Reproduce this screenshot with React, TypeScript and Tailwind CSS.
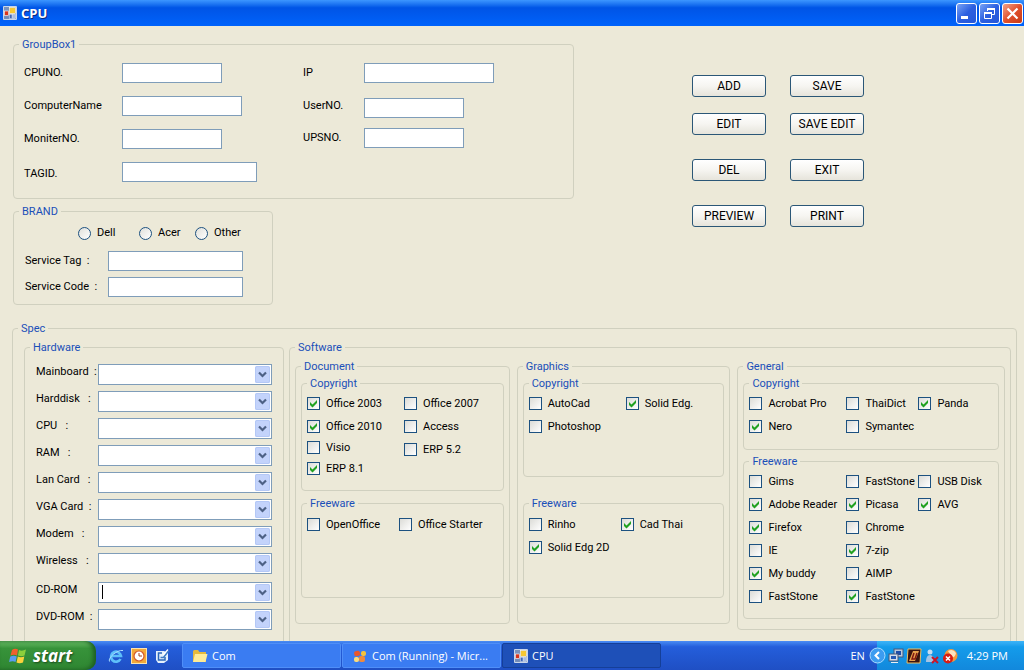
import { useId, type ReactNode } from "react";

type Item = { label: string; checked?: boolean; gap?: string };

function Group({ title, className = "", children }: { title: string; className?: string; children: ReactNode }) {
  return (
    <fieldset className={`min-w-0 rounded-[4px] border border-[#d0d0bf] ${className}`}>
      <legend className="ml-[5px] px-[3px] leading-[13px] text-[#1a4fb8]">{title}</legend>
      {children}
    </fieldset>
  );
}

function Field({
  label,
  labelWidth,
  inputWidth,
  className = "items-center",
}: {
  label: string;
  labelWidth: string;
  inputWidth: string;
  className?: string;
}) {
  const id = useId();
  return (
    <div className={`flex ${className}`}>
      <label htmlFor={id} className={`shrink-0 whitespace-pre leading-4 ${labelWidth}`}>
        {label}
      </label>
      <input id={id} type="text" className={`h-5 border border-[#7f9db9] bg-white px-1 outline-none ${inputWidth}`} />
    </div>
  );
}

function Combo({ label, caret }: { label: string; caret?: boolean }) {
  const id = useId();
  return (
    <div className="flex items-start">
      <label htmlFor={id} className="w-[62px] shrink-0 whitespace-pre leading-4">
        {label}
      </label>
      <div className="relative h-[21px] min-w-0 flex-1">
        <select id={id} className="block h-full w-full appearance-none border border-[#7f9db9] bg-white outline-none" />
        {caret && <span className="absolute left-1 top-[3px] h-[14px] w-px bg-black" />}
        <svg className="pointer-events-none absolute right-[2px] top-[2px] h-[17px] w-[15px]" viewBox="0 0 15 17">
          <rect width="15" height="17" rx="1.5" fill="#c3d3fb" />
          <rect x="0.5" y="0.5" width="14" height="16" rx="1.5" fill="none" stroke="#b4c8f6" />
          <path d="M4 6.5l3.5 3.5L11 6.5" fill="none" stroke="#4d6185" strokeWidth="2.2" />
        </svg>
      </div>
    </div>
  );
}

function Check({ label, checked, gap = "" }: Item) {
  return (
    <label className={`flex h-[13px] items-center gap-[6px] whitespace-nowrap ${gap}`}>
      <span className="relative h-[13px] w-[13px] shrink-0">
        <input
          type="checkbox"
          defaultChecked={checked}
          className="peer block h-[13px] w-[13px] appearance-none border border-[#1c5180] bg-linear-to-br from-[#dcdcd7] to-white"
        />
        <svg className="pointer-events-none absolute inset-0 hidden peer-checked:block" viewBox="0 0 13 13">
          <path d="M3 5v3l2.5 2.5L10 6V3L5.500 7.500z" fill="#21a121" />
        </svg>
      </span>
      {label}
    </label>
  );
}

function CheckColumn({ items, gap = "gap-2.5" }: { items: Item[]; gap?: string }) {
  return (
    <div className={`flex flex-col ${gap}`}>
      {items.map((item, i) => (
        <Check key={i} {...item} />
      ))}
    </div>
  );
}

function Radio({ label }: { label: string }) {
  return (
    <label className="flex h-[14px] items-center gap-[6px]">
      <input
        type="radio"
        name="brand"
        className="h-[13px] w-[13px] appearance-none rounded-full border border-[#1c5180] bg-linear-to-br from-[#e0e0da] to-white checked:border-4"
      />
      {label}
    </label>
  );
}

function FormButton({ children }: { children: ReactNode }) {
  return (
    <button
      type="button"
      className="h-[22px] w-[74px] rounded-[3px] border border-[#2b5777] bg-linear-to-b from-white via-[#f6f5f1] to-[#e6e4db] text-xs leading-4"
    >
      {children}
    </button>
  );
}

function FormIcon({ className }: { className: string }) {
  return (
    <svg className={className} viewBox="0 0 14 14">
      <rect width="14" height="14" rx="1" fill="#c9d6ea" />
      <rect x="1" y="1" width="12" height="12" fill="#7b93bd" />
      <rect x="1.500" y="5" width="4" height="4.500" fill="#d8341c" stroke="#fff" strokeWidth="0.6" />
      <rect x="6.500" y="1.500" width="6" height="6" fill="#f6c832" stroke="#fff" strokeWidth="0.6" />
      <rect x="6.500" y="8.500" width="2.500" height="4" fill="#3e66b8" stroke="#dce6f5" strokeWidth="0.5" />
      <rect x="9.500" y="8.500" width="3" height="4" fill="#a8bce0" stroke="#dce6f5" strokeWidth="0.5" />
      <rect x="1.500" y="10.500" width="4" height="2" fill="#6d88b8" />
    </svg>
  );
}

function TitleBar() {
  const button = "flex h-[21px] w-[21px] items-center justify-center rounded-[3px] border border-white";
  return (
    <header className="flex h-[26px] shrink-0 items-center bg-linear-to-b from-[#3c96ff] via-[#0054e6] via-30% to-[#0063fb] pl-[3px] pr-px">
      <FormIcon className="h-[14px] w-[14px]" />
      <h1 className="ml-1 flex-1 font-['Open_Sans',sans-serif] text-[13px] font-bold text-white [text-shadow:1px_1px_#0a2a80]">
        CPU
      </h1>
      <div className="flex gap-[2px]">
        <button type="button" aria-label="Minimize" className={`${button} bg-linear-to-br from-[#7aa2f5] via-[#2c5fe0] to-[#2456d8]`}>
          <svg className="h-[19px] w-[19px]" viewBox="0 0 19 19">
            <rect x="4" y="12" width="7" height="3" fill="#fff" />
          </svg>
        </button>
        <button type="button" aria-label="Restore" className={`${button} bg-linear-to-br from-[#7aa2f5] via-[#2c5fe0] to-[#2456d8]`}>
          <svg className="h-[19px] w-[19px]" viewBox="0 0 19 19" fill="none" stroke="#fff">
            <path d="M7.500 7V4.500h7v6H12" />
            <path d="M7 5h8" strokeWidth="2" />
            <path d="M4.500 8.500h7v6h-7z" />
            <path d="M4 9h8" strokeWidth="2" />
          </svg>
        </button>
        <button type="button" aria-label="Close" className={`${button} bg-linear-to-br from-[#f0a088] via-[#e0502c] to-[#c83a12]`}>
          <svg className="h-[19px] w-[19px]" viewBox="0 0 19 19">
            <path d="M4.500 4.500l10 10M14.500 4.500l-10 10" stroke="#fff" strokeWidth="2.200" />
          </svg>
        </button>
      </div>
    </header>
  );
}

function Hardware() {
  return (
    <Group title="Hardware" className="w-[260px] shrink-0">
      <div className="flex flex-col gap-2 pb-8 pl-[11px] pr-[11px] pt-[10px]">
        <div className="flex flex-col gap-1.5">
          <Combo label="Mainboard  :" />
          <Combo label="Harddisk   :" />
          <Combo label="CPU   :" />
          <Combo label="RAM   :" />
          <Combo label="Lan Card   :" />
          <Combo label="VGA Card  :" />
          <Combo label="Modem   :" />
          <Combo label="Wireless   :" />
        </div>
        <div className="flex flex-col gap-1.5">
          <Combo label="CD-ROM" caret />
          <Combo label="DVD-ROM  :" />
        </div>
      </div>
    </Group>
  );
}

function Software() {
  return (
    <Group title="Software" className="flex-1">
      <div className="grid grid-cols-[215fr_214fr_268fr] items-start gap-[7px] px-[5px] pt-[6px]">
        <Group title="Document">
          <div className="flex flex-col gap-1.5 px-[5px] pb-[25px] pt-1">
            <Group title="Copyright" className="min-h-[114px]">
              <div className="grid grid-cols-[97px_auto] items-start pl-[5px] pt-[7px]">
                <CheckColumn
                  gap=""
                  items={[
                    { label: "Office 2003", checked: true },
                    { label: "Office 2010", checked: true, gap: "mt-2.5" },
                    { label: "Visio", gap: "mt-2" },
                    { label: "ERP 8.1", checked: true, gap: "mt-2" },
                  ]}
                />
                <CheckColumn items={[{ label: "Office 2007" }, { label: "Access" }, { label: "ERP 5.2" }]} />
              </div>
            </Group>
            <Group title="Freeware" className="min-h-[101px]">
              <div className="grid grid-cols-[92px_auto] pl-[5px] pt-2">
                <Check label="OpenOffice" />
                <Check label="Office Starter" />
              </div>
            </Group>
          </div>
        </Group>

        <Group title="Graphics">
          <div className="flex flex-col gap-5 px-[5px] pb-[25px] pt-1">
            <Group title="Copyright" className="min-h-[100px]">
              <div className="grid grid-cols-[97px_auto] items-start pl-[5px] pt-[7px]">
                <CheckColumn items={[{ label: "AutoCad" }, { label: "Photoshop" }]} />
                <Check label="Solid Edg." checked />
              </div>
            </Group>
            <Group title="Freeware" className="min-h-[101px]">
              <div className="grid grid-cols-[92px_auto] items-start pl-[5px] pt-2">
                <CheckColumn items={[{ label: "Rinho" }, { label: "Solid Edg 2D", checked: true }]} />
                <Check label="Cad Thai" checked />
              </div>
            </Group>
          </div>
        </Group>

        <Group title="General">
          <div className="flex flex-col gap-[5px] px-[5px] pb-[10px] pt-1">
            <Group title="Copyright" className="min-h-[73px]">
              <div className="grid grid-cols-[97px_72px_auto] items-start pl-[5px] pt-[7px]">
                <CheckColumn items={[{ label: "Acrobat Pro" }, { label: "Nero", checked: true }]} />
                <CheckColumn items={[{ label: "ThaiDict" }, { label: "Symantec" }]} />
                <Check label="Panda" checked />
              </div>
            </Group>
            <Group title="Freeware" className="min-h-[164px]">
              <div className="grid grid-cols-[97px_72px_auto] items-start pl-[5px] pt-[7px]">
                <CheckColumn
                  items={[
                    { label: "Gims" },
                    { label: "Adobe Reader", checked: true },
                    { label: "Firefox", checked: true },
                    { label: "IE" },
                    { label: "My buddy", checked: true },
                    { label: "FastStone" },
                  ]}
                />
                <CheckColumn
                  items={[
                    { label: "FastStone" },
                    { label: "Picasa", checked: true },
                    { label: "Chrome" },
                    { label: "7-zip", checked: true },
                    { label: "AIMP" },
                    { label: "FastStone", checked: true },
                  ]}
                />
                <CheckColumn items={[{ label: "USB Disk" }, { label: "AVG", checked: true }]} />
              </div>
            </Group>
          </div>
        </Group>
      </div>
    </Group>
  );
}

function Taskbar() {
  const task = "flex h-[25px] w-[159px] items-center gap-1 rounded-[2px] border pl-[9px] text-left";
  return (
    <footer className="flex h-[29px] shrink-0 items-stretch bg-linear-to-b from-[#4a8cf4] via-[#245edb] via-20% to-[#1f4fc4] font-['Open_Sans',sans-serif] text-[11px] text-white">
      <button
        type="button"
        className="flex w-24 items-center gap-1 rounded-r-[10px] bg-linear-to-b from-[#6cc069] via-[#37933a] via-25% to-[#2f8632] pl-[9px] shadow-[inset_-3px_0_4px_#1d5e22]"
      >
        <svg className="h-5 w-5" viewBox="0 0 20 20">
          <path d="M3 4q3-2 6-.5L8 9.500Q5 8 1.500 9.500z" fill="#f0602c" />
          <path d="M10 4q3 1.500 7-.5L15.500 9.500q-3 1.500-6.500 0z" fill="#8ccf3c" />
          <path d="M1.300 10.500q3.500-1.500 6.500 0L6.500 16Q4 14.500 0 16z" fill="#5a9cf0" />
          <path d="M8.800 10.500q3 1.500 6.500 0L14 16.500q-3.500 1.500-6.500 0z" fill="#fbd23c" />
        </svg>
        <span className="text-[17px] font-bold italic leading-5 [text-shadow:1px_1px_2px_#1a4a1c]">start</span>
      </button>

      <div className="ml-3 flex items-center gap-[7px]">
        <svg className="h-4 w-4" viewBox="0 0 16 16" fill="none">
          <path d="M12.500 11A5 5 0 1 1 13 8H4" stroke="#5fc0fa" strokeWidth="2.600" />
          <path d="M1.500 13.500C-.5 10 9 1.500 15 2.500" stroke="#a8dcff" />
        </svg>
        <svg className="h-4 w-4" viewBox="0 0 16 16">
          <rect x="0.500" y="0.500" width="15" height="15" fill="#f2a93a" stroke="#fbe3b0" />
          <circle cx="8" cy="8" r="5" fill="#fff" stroke="#d4582a" strokeWidth="1.200" />
          <path d="M8 5v3h3" fill="none" stroke="#a8441c" />
        </svg>
        <svg className="h-4 w-4" viewBox="0 0 16 16">
          <path d="M2 3h8l4 2v7l-4 3H4l-2-3z" fill="#e4f0fc" />
          <path d="M8 5H4.500v7H11V9" fill="none" stroke="#2a66b8" strokeWidth="1.500" />
          <path d="M6.500 9.500h3L14.500 3" fill="none" stroke="#3c7ac4" strokeWidth="1.500" />
          <path d="M9 7l5-5.500" stroke="#fff" strokeWidth="1.200" />
        </svg>
      </div>

      <div className="ml-3 flex min-w-0 flex-1 items-center gap-px">
        <button type="button" className={`${task} border-[#4f8ef8] bg-[#3a7cf2]`}>
          <svg className="h-[14px] w-4 shrink-0" viewBox="0 0 16 14">
            <path d="M1 2.500Q1 1 2.500 1H6l1.500 2H14v10H1z" fill="#e5b93c" />
            <path d="M3 5h12.500L13.500 13H1z" fill="#fdeb98" />
          </svg>
          Com
        </button>
        <button type="button" className={`${task} border-[#4f8ef8] bg-[#3a7cf2]`}>
          <svg className="h-4 w-4 shrink-0" viewBox="0 0 16 16">
            <rect x="2" y="3" width="6" height="5" rx="2" fill="#e9572b" transform="rotate(-15 5 5)" />
            <rect x="9" y="3" width="5" height="5" rx="2" fill="#f6c23c" />
            <rect x="7" y="8" width="6" height="6" rx="2" fill="#f08a3c" />
            <rect x="2" y="9" width="5" height="5" rx="2" fill="#fbdc7c" />
          </svg>
          <span className="truncate">Com (Running) - Micr...</span>
        </button>
        <button type="button" className={`${task} border-[#153f98] bg-[#1e50b8] pl-[11px]`}>
          <FormIcon className="h-[14px] w-[14px]" />
          CPU
        </button>
      </div>

      <span className="flex items-center pr-3">EN</span>
      <div className="flex items-center gap-[2px] bg-linear-to-b from-[#3cb4f8] via-[#149ceb] via-20% to-[#1288dc] pr-4">
        <button type="button" aria-label="Show hidden icons" className="-ml-2 h-[17px] w-[17px]">
          <svg viewBox="0 0 17 17">
            <circle cx="8.500" cy="8.500" r="7.500" fill="#3c9cf0" stroke="#a8dcff" />
            <path d="M10 5L6.500 8.500 10 12" fill="none" stroke="#fff" strokeWidth="2" />
          </svg>
        </button>
        <svg className="h-4 w-4" viewBox="0 0 16 16">
          <rect x="6" y="1" width="9" height="8" fill="#b8c8dc" stroke="#44587c" />
          <rect x="8" y="3" width="5" height="4" fill="#1c4ca8" />
          <rect x="1" y="6" width="9" height="7" fill="#d4deea" stroke="#44587c" />
          <rect x="3" y="8" width="5" height="3" fill="#2458b4" />
          <path d="M3 14.500h7" stroke="#e8eef4" />
        </svg>
        <svg className="h-4 w-4" viewBox="0 0 16 16">
          <path d="M2 1h13l-1 14H1z" fill="#3a1410" stroke="#f0c060" />
          <path d="M3 13L7 3h6L9 13z" fill="#e8a04c" />
          <path d="M8 5l-2 6h3l2-6" fill="none" stroke="#801810" strokeWidth="1.500" />
        </svg>
        <svg className="h-4 w-4" viewBox="0 0 16 16">
          <circle cx="6" cy="4" r="2.500" fill="#c8dcf0" />
          <path d="M2 14q0-7 4-7t5 7z" fill="#a4c4e4" />
          <path d="M8 9l6 6M14 9l-6 6" stroke="#c81428" strokeWidth="2" />
        </svg>
        <svg className="h-4 w-4" viewBox="0 0 16 16">
          <circle cx="9" cy="7.500" r="6.500" fill="#f49a3c" />
          <path d="M6 3q5-3 8 2-1 5-4 4z" fill="#fce4c0" />
          <circle cx="6" cy="10.500" r="5" fill="#d81c14" />
          <path d="M4 8.500l4 4M8 8.500l-4 4" stroke="#fff" strokeWidth="1.500" />
        </svg>
        <time className="ml-[7px] whitespace-nowrap">4:29 PM</time>
      </div>
    </footer>
  );
}

export default function App() {
  return (
    <div className="flex h-screen flex-col overflow-hidden bg-[#ece9d8] font-[Roboto,sans-serif] text-[11px] leading-4 text-black">
      <TitleBar />

      <main className="min-h-0 flex-1 overflow-hidden pt-3">
        <div className="flex items-start pl-[13px]">
          <div className="flex flex-col gap-1.5">
            <Group title="GroupBox1" className="w-[561px]">
              <div className="flex items-start pb-4 pl-[10px] pt-3">
                <div className="flex w-[279px] flex-col gap-[13px]">
                  <Field label="CPUNO." labelWidth="w-[98px]" inputWidth="w-[100px]" />
                  <Field label="ComputerName" labelWidth="w-[98px]" inputWidth="w-[120px]" />
                  <Field label="MoniterNO." labelWidth="w-[98px]" inputWidth="w-[100px]" />
                  <Field label="TAGID." labelWidth="w-[98px]" inputWidth="w-[135px]" className="items-end" />
                </div>
                <div className="flex flex-col">
                  <Field label="IP" labelWidth="w-[61px]" inputWidth="w-[130px]" />
                  <Field label="UserNO." labelWidth="w-[61px]" inputWidth="w-[100px]" className="mt-[15px] items-start" />
                  <Field label="UPSNO." labelWidth="w-[61px]" inputWidth="w-[100px]" className="mt-2.5 items-center" />
                </div>
              </div>
            </Group>

            <Group title="BRAND" className="w-[260px]">
              <div className="flex flex-col gap-1.5 pb-[7px] pl-[11px] pt-2">
                <div className="mb-[5px] grid grid-cols-[61px_56px_auto] pl-[53px]">
                  <Radio label="Dell" />
                  <Radio label="Acer" />
                  <Radio label="Other" />
                </div>
                <Field label="Service Tag  :" labelWidth="w-[83px]" inputWidth="w-[135px]" />
                <Field label="Service Code  :" labelWidth="w-[83px]" inputWidth="w-[135px]" />
              </div>
            </Group>
          </div>

          {/* Commands */}
          <div className="ml-[118px] flex flex-col gap-6 pt-[37px]">
            <div className="grid grid-cols-[74px_74px] gap-x-6 gap-y-4">
              <FormButton>ADD</FormButton>
              <FormButton>SAVE</FormButton>
              <FormButton>EDIT</FormButton>
              <FormButton>SAVE EDIT</FormButton>
            </div>
            <div className="grid grid-cols-[74px_74px] gap-x-6 gap-y-6">
              <FormButton>DEL</FormButton>
              <FormButton>EXIT</FormButton>
              <FormButton>PREVIEW</FormButton>
              <FormButton>PRINT</FormButton>
            </div>
          </div>
        </div>

        <Group title="Spec" className="ml-3 mr-[7px] mt-[17px]">
          <div className="flex gap-[5px] pb-3 pl-[11px] pr-[5px] pt-1.5">
            <Hardware />
            <Software />
          </div>
        </Group>
      </main>

      <Taskbar />
    </div>
  );
}
